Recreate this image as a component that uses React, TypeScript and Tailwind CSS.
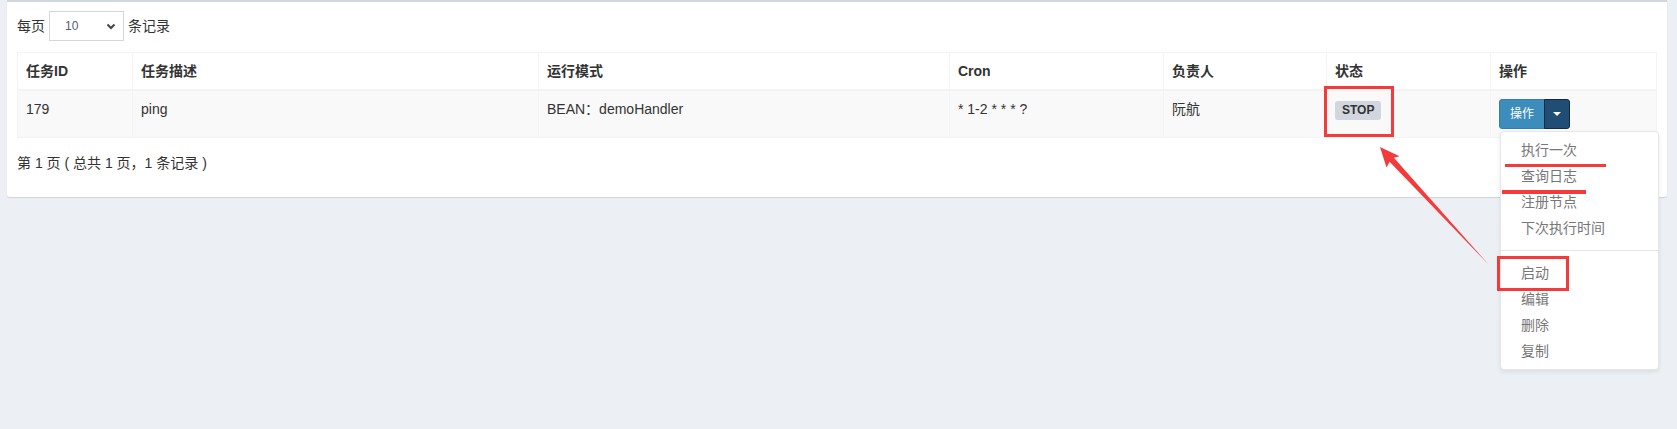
import React from 'react';

const FONT = '"Liberation Sans", "Noto Sans CJK SC", sans-serif';

interface Column {
  title: string;
  width: string;
}

const columns: Column[] = [
  { title: '任务ID', width: 'w-[115px]' },
  { title: '任务描述', width: 'w-[406px]' },
  { title: '运行模式', width: 'w-[411px]' },
  { title: 'Cron', width: 'w-[214px]' },
  { title: '负责人', width: 'w-[163px]' },
  { title: '状态', width: 'w-[164px]' },
  { title: '操作', width: 'w-[166px]' }
];

const menuTop = ['执行一次', '查询日志', '注册节点', '下次执行时间'];
const menuBottom = ['启动', '编辑', '删除', '复制'];

const ActionButton: React.FC = () => {
  return (
    <div className="relative inline-flex align-top">
      <button className="h-[30px] px-[10px] text-xs leading-[18px] text-white bg-[#3c8dbc] border border-[#367fa9] rounded-l-[3px]">
        操作
      </button>
      <button className="h-[30px] w-[26px] flex items-center justify-center bg-[#204d74] border border-[#122b40] rounded-r-[3px] -ml-px">
        <svg width="8" height="4" viewBox="0 0 8 4">
          <path d="M0 0 L8 0 L4 4 Z" fill="#fff" />
        </svg>
      </button>

      {/* Dropdown menu (open) */}
      <div className="absolute left-[1px] top-full mt-[2px] w-[159px] bg-white border border-[#e6e6e6] rounded-[4px] shadow-[0_2px_4px_rgba(0,0,0,0.08)] py-[5px] z-10">
        {menuTop.map((item) => (
          <div key={item} className="px-5 py-[3px] text-sm leading-5 text-[#777] whitespace-nowrap">
            {item}
          </div>
        ))}
        <div className="my-[9px] h-px bg-[#e5e5e5]" />
        {menuBottom.map((item) => (
          <div key={item} className="px-5 py-[3px] text-sm leading-5 text-[#777] whitespace-nowrap">
            {item}
          </div>
        ))}
      </div>
    </div>
  );
};

const Annotations: React.FC = () => {
  const red = '#f33b3b';
  return (
    <svg className="absolute inset-0 pointer-events-none z-20" width="1677" height="429" viewBox="0 0 1677 429">
      <rect x="1325.5" y="87.5" width="67" height="48" fill="none" stroke={red} strokeWidth="3" />
      <rect x="1505" y="164" width="101" height="3" fill={red} />
      <rect x="1502" y="190" width="84" height="4" fill={red} />
      <rect x="1498.5" y="257.5" width="69" height="32" fill="none" stroke={red} strokeWidth="3" />
      <polygon
        points="1380,147 1399.5,156.3 1393.9,157.8 1489,265 1389.6,161.8 1386.5,167.5"
        fill={red}
      />
    </svg>
  );
};

export default function App() {
  return (
    <div className="relative w-full h-[429px] bg-[#ecf0f5] overflow-hidden text-[#333]" style={{ fontFamily: FONT }}>
      <div className="pl-[7px] pr-[10px]">
        <div className="bg-white border-t-2 border-[#d2d6de] rounded-b-[3px] shadow-[0_1px_1px_rgba(0,0,0,0.12)] px-[10px] pt-[9px] pb-[24px]">
          {/* Page length */}
          <div className="flex items-center h-[30px] text-sm">
            <span>每页</span>
            <div className="ml-[4px] w-[75px] h-[30px] border border-[#d2d6de] flex items-center justify-between pl-[15px] pr-[7px]">
              <span className="text-xs text-[#4f5d78]">10</span>
              <svg width="10" height="7" viewBox="0 0 10 7">
                <path d="M1.5 1.5 L5 5 L8.5 1.5" fill="none" stroke="#444" strokeWidth="2" />
              </svg>
            </div>
            <span className="ml-[4px]">条记录</span>
          </div>

          {/* Table */}
          <table className="mt-[11px] w-full table-fixed border-collapse border border-[#f4f4f4] text-sm">
            <thead>
              <tr>
                {columns.map((c) => (
                  <th
                    key={c.title}
                    className={`${c.width} text-left font-bold px-2 py-2 leading-5 border border-[#f4f4f4] border-b-2`}
                  >
                    {c.title}
                  </th>
                ))}
              </tr>
            </thead>
            <tbody>
              <tr className="bg-[#f9f9f9]">
                <td className="align-top px-2 py-2 leading-5 border border-[#f4f4f4]">179</td>
                <td className="align-top px-2 py-2 leading-5 border border-[#f4f4f4]">ping</td>
                <td className="align-top px-2 py-2 leading-5 border border-[#f4f4f4]">BEAN：demoHandler</td>
                <td className="align-top px-2 py-2 leading-5 border border-[#f4f4f4]">* 1-2 * * * ?</td>
                <td className="align-top px-2 py-2 leading-5 border border-[#f4f4f4]">阮航</td>
                <td className="align-top px-2 py-2 leading-5 border border-[#f4f4f4]">
                  <span className="inline-block mt-[2px] bg-[#d2d6de] text-[#333] font-bold text-xs leading-none px-[7px] pt-[3px] pb-[4px] rounded-[3px]">
                    STOP
                  </span>
                </td>
                <td className="align-top px-2 py-2 leading-5 border border-[#f4f4f4]">
                  <ActionButton />
                </td>
              </tr>
            </tbody>
          </table>

          {/* Info */}
          <div className="mt-[15px] text-sm leading-5">第 1 页 ( 总共 1 页，1 条记录 )</div>
        </div>
      </div>

      <Annotations />
    </div>
  );
}
